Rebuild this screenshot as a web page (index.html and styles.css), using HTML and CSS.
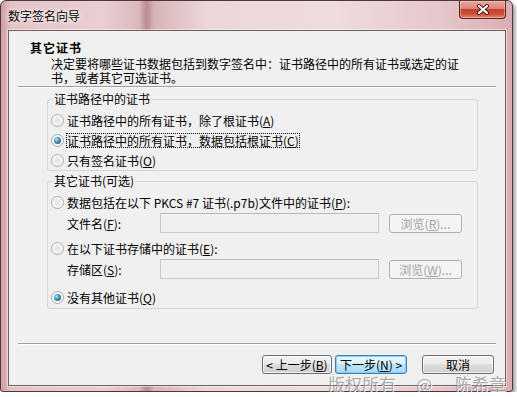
FILE: index.html
```html
<!DOCTYPE html>
<html lang="zh-CN">
<head>
  <meta charset="UTF-8">
  <title>数字签名向导</title>
  <link rel="stylesheet" href="styles.css">
</head>
<body>

  <div class="window">
    <div class="titlebar">
      <span class="title">数字签名向导</span>
      <button class="close" aria-label="关闭">
        <svg width="14" height="11" viewBox="0 0 14 11">
          <path d="M3 2 L11 9 M11 2 L3 9" stroke="#4a1a18" stroke-width="4" stroke-linecap="round"/>
          <path d="M3 2 L11 9 M11 2 L3 9" stroke="#fff" stroke-width="2.2" stroke-linecap="round"/>
        </svg>
      </button>
    </div>

    <div class="client">
      <div class="header">
        <div class="head-title">其它证书</div>
        <div class="head-desc">决定要将哪些证书数据包括到数字签名中：证书路径中的所有证书或选定的证<br>书，或者其它可选证书。</div>
      </div>
      <div class="sep"></div>

      <fieldset class="group group-path">
        <legend>证书路径中的证书</legend>
        <label class="opt"><span class="radio"></span>证书路径中的所有证书，除了根证书(<u>A</u>)</label>
        <label class="opt"><span class="radio checked"></span><span class="focus">证书路径中的所有证书，数据包括根证书(<u>C</u>)</span></label>
        <label class="opt"><span class="radio"></span>只有签名证书(<u>O</u>)</label>
      </fieldset>

      <fieldset class="group group-other">
        <legend>其它证书(可选)</legend>
        <label class="opt"><span class="radio"></span>数据包括在以下 PKCS #7 证书(.p7b)文件中的证书(<u>P</u>):</label>
        <div class="field">
          <span class="field-label">文件名(<u>F</u>):</span>
          <input class="textbox" type="text" disabled>
          <button class="btn browse" disabled>浏览(<u>R</u>)...</button>
        </div>
        <label class="opt opt-store"><span class="radio"></span>在以下证书存储中的证书(<u>E</u>):</label>
        <div class="field">
          <span class="field-label">存储区(<u>S</u>):</span>
          <input class="textbox" type="text" disabled>
          <button class="btn browse" disabled>浏览(<u>W</u>)...</button>
        </div>
        <label class="opt opt-none"><span class="radio checked"></span>没有其他证书(<u>Q</u>)</label>
      </fieldset>

      <div class="sep sep-bottom"></div>
      <div class="buttons">
        <button class="btn btn-back">&lt; 上一步(<u>B</u>)</button>
        <button class="btn btn-next">下一步(<u>N</u>) &gt;</button>
        <button class="btn btn-cancel">取消</button>
      </div>
    </div>

    <div class="watermark">
      <span>版权所有</span>
      <span class="wm-at">@</span>
      <span class="wm-name">陈希章</span>
    </div>
  </div>

</body>
</html>
```

FILE: styles.css
```css
body {
  margin: 0;
  background: #fff;
  font-family: "Noto Sans CJK SC", "Liberation Sans", sans-serif;
  font-size: 12px;
  color: #000;
}

.window {
  position: relative;
  box-sizing: border-box;
  width: 513px;
  height: 392px;
  padding: 0 6px 5px 7px;
  border: 1px solid #4e3a3d;
  border-radius: 6px 6px 3px 3px;
  background: linear-gradient(90deg, #cf9ea4 0, #e4c3c6 2%, #e9cfd1 20%, #dcb8bc 27%, #b98b91 28.5%, #d8b3b7 30%, #ecd6d8 40%, #efdcdd 65%, #e6c8cb 85%, #d9aeb3 100%);
  box-shadow: 2px 3px 4px rgba(0, 0, 0, 0.45);
}

.titlebar {
  display: flex;
  height: 29px;
}

.title {
  align-self: center;
  line-height: 14px;
  text-shadow: 0 0 6px #fff, 0 0 3px #fff;
}

.close {
  margin-left: auto;
  width: 47px;
  height: 18px;
  padding: 0;
  border: 1px solid #5e2624;
  border-top: none;
  border-radius: 0 0 4px 4px;
  background: linear-gradient(#e9a89c 0, #dc8474 45%, #c4412f 50%, #cc4d36 75%, #e08a68 100%);
  box-shadow: inset 0 0 0 1px rgba(255, 210, 200, 0.45);
  display: flex;
  align-items: center;
  justify-content: center;
}

.client {
  box-sizing: border-box;
  height: 356px;
  background: #f0f0f0;
  border: 1px solid #6d6163;
  box-shadow: 0 0 0 1px rgba(255, 255, 255, 0.45);
  display: flex;
  flex-direction: column;
}

.header {
  padding: 10px 0 0 21px;
}

.head-title {
  font-weight: bold;
  line-height: 14px;
  letter-spacing: 1px;
}

.head-desc {
  margin: 2px 0 0 21px;
  line-height: 14px;
}

.sep {
  margin: 1px 9px 0;
  border-top: 1px solid #a0a0a0;
  border-bottom: 1px solid #fff;
}

.group {
  margin: 5px 27px 0 38px;
  padding: 5px 0 0 3px;
  border: 1px solid #d5d5d5;
  border-radius: 3px;
  min-width: 0;
}

.group legend {
  margin-left: 2px;
  padding: 0 1px;
  line-height: 12px;
}

.group-other {
  margin-top: 4px;
  padding-bottom: 1px;
}

.opt {
  display: flex;
  align-items: center;
  height: 20px;
  white-space: nowrap;
}

.opt-store {
  margin-top: 4px;
}

.opt-none {
  margin-top: 7px;
}

.radio {
  position: relative;
  box-sizing: border-box;
  width: 13px;
  height: 13px;
  margin-right: 3px;
  border: 1px solid #a9a9a9;
  border-radius: 50%;
  background: radial-gradient(circle at 50% 50%, #e2e2e2 0, #eeeeee 45%, #f8f8f8 100%);
  box-shadow: inset 0 0 0 1px #fff;
}

.radio.checked::after {
  content: "";
  position: absolute;
  left: 2px;
  top: 2px;
  width: 7px;
  height: 7px;
  border-radius: 50%;
  background: radial-gradient(circle at 35% 35%, #b5e6fb 0, #4f93c2 40%, #1f4a6c 100%);
}

.focus {
  line-height: 13px;
  outline: 1px dotted #000;
}

.field {
  display: flex;
  align-items: center;
  height: 22px;
  padding-left: 16px;
}

.field-label {
  width: 93px;
}

.textbox {
  box-sizing: border-box;
  width: 219px;
  height: 20px;
  margin: 0;
  border: 1px solid #c9c9c9;
  border-top-color: #b9b9b9;
  border-radius: 1px;
  background: #f0f0f0;
}

.btn {
  box-sizing: border-box;
  height: 19px;
  padding: 0;
  border: 1px solid #707070;
  border-radius: 3px;
  background: linear-gradient(#f2f2f2 0, #ebebeb 50%, #dddddd 50%, #cfcfcf 100%);
  box-shadow: inset 0 0 0 1px rgba(255, 255, 255, 0.7);
  font-family: inherit;
  font-size: 12px;
  line-height: 15px;
  color: #000;
}

.btn.browse {
  width: 73px;
  margin-left: 10px;
  border-color: #adb2b5;
  background: #f4f4f4;
  box-shadow: none;
  color: #a3a3a3;
}

.sep-bottom {
  margin-top: auto;
}

.buttons {
  display: flex;
  justify-content: flex-end;
  padding: 10px 11px 11px 0;
}

.btn-back {
  width: 70px;
}

.btn-next {
  width: 72px;
  margin-left: 3px;
  border-color: #3c7fb1;
  background: linear-gradient(#eaf6fd 0, #d9f0fc 50%, #bee6fd 50%, #a7d9f5 100%);
  box-shadow: inset 0 0 0 1px rgba(120, 200, 240, 0.8);
}

.btn-cancel {
  width: 72px;
  margin-left: 15px;
}

.watermark {
  position: absolute;
  left: 327px;
  top: 374px;
  display: flex;
  font-size: 17px;
  line-height: 17px;
  color: rgba(130, 130, 130, 0.65);
  text-shadow: 1px 1px 0 rgba(255, 255, 255, 0.8);
}

.wm-at {
  margin-left: 20px;
}

.wm-name {
  margin-left: 23px;
}
```
